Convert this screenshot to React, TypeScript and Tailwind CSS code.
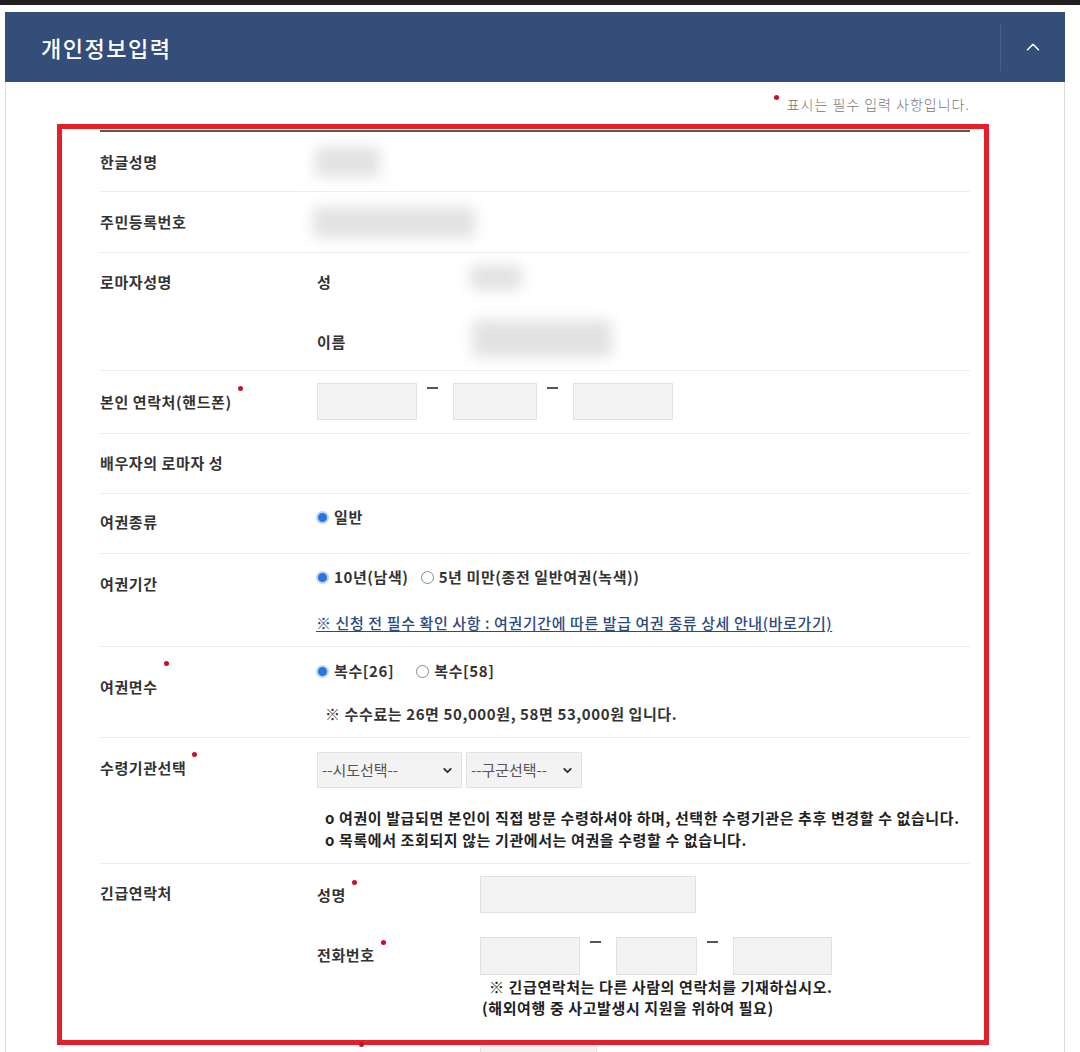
import { ChevronDown, ChevronUp } from "lucide-react";

const labelCls = "w-[217px] shrink-0 text-[15px] leading-[20px] font-bold text-[#333]";
const inputCls = "bg-[#f3f3f3] border border-[#e2e2e2]";

function Dot({ top = "-top-[8px]" }: { top?: string }) {
  return <span className={`absolute -right-[11px] ${top} w-[5px] h-[5px] rounded-full bg-[#c8102e]`} />;
}

function Req({ text, top }: { text: string; top?: string }) {
  return (
    <span className="relative inline-block">
      {text}
      <Dot top={top} />
    </span>
  );
}

function Radio({ checked, label }: { checked?: boolean; label: string }) {
  return (
    <span className="flex items-center gap-[5px]">
      {checked ? (
        <span className="w-[13px] h-[13px] rounded-full bg-[#2a76e0] border-[2px] border-[#bcd4f4]" />
      ) : (
        <span className="w-[13px] h-[13px] rounded-full border border-[#8a8a8a] bg-white" />
      )}
      <span>{label}</span>
    </span>
  );
}

function Dash() {
  return <span className="self-start mt-[4px] ml-[10px] mr-[15px] w-[11px] h-[2px] bg-[#555]" />;
}

function Blur({ w, h }: { w: string; h: string }) {
  return <div className={`${w} ${h} bg-[#e2e2e2] blur-[7px] rounded`} />;
}

function SelectBox({ w, text }: { w: string; text: string }) {
  return (
    <div className={`${w} h-[36px] ${inputCls} flex items-center justify-between pl-[4px] pr-[7px] text-[15px] tracking-normal font-normal text-[#555]`}>
      <span>{text}</span>
      <ChevronDown size={13} strokeWidth={3.5} className="text-[#333]" />
    </div>
  );
}

export default function App() {
  return (
    <div className="w-[1080px] h-[1052px] overflow-hidden bg-white font-['Noto_Sans_CJK_KR',sans-serif]">
      <div className="h-[5px] bg-[#1e1e1e]" />
      <div className="ml-[5px] w-[1060px] mt-[7px]">
        {/* header */}
        <div className="h-[70px] bg-[#344d79] flex items-center">
          <div className="flex-1 pl-[36px] text-[22px] font-medium text-white tracking-[1.5px]">개인정보입력</div>
          <div className="w-[65px] h-[47px] border-l border-[#45608c] flex items-center justify-center">
            <ChevronUp size={22} strokeWidth={1.6} className="text-white" />
          </div>
        </div>

        {/* body */}
        <div className="border-x border-[#dcdcdc] pb-[40px]">
          <div className="pt-[12px] pr-[94px] flex justify-end">
            <span className="relative text-[14px] leading-[20px] text-[#777] font-light tracking-[1px]">
              <span className="absolute -left-[13px] top-[1px] w-[5px] h-[5px] rounded-full bg-[#c8102e]" />
              표시는 필수 입력 사항입니다.
            </span>
          </div>

          <div className="mt-[10px] ml-[51px] w-[932px] border-[5px] border-[#e5202a] pt-[1px] pl-[38px]">
            <div className="w-[870px] border-t-2 border-[#5a5a5a] text-[15px] leading-[20px] tracking-[0.6px] font-bold text-[#333]">
              {/* 한글성명 */}
              <div className="flex h-[60px] border-b border-[#ededed]">
                <div className={`${labelCls} pt-[20px]`}>한글성명</div>
                <div className="pt-[15px] -ml-[2px]"><Blur w="w-[65px]" h="h-[30px]" /></div>
              </div>
              {/* 주민등록번호 */}
              <div className="flex h-[61px] border-b border-[#ededed]">
                <div className={`${labelCls} pt-[20px]`}>주민등록번호</div>
                <div className="pt-[15px] -ml-[4px]"><Blur w="w-[162px]" h="h-[31px]" /></div>
              </div>
              {/* 로마자성명 */}
              <div className="flex h-[118px] border-b border-[#ededed]">
                <div className={`${labelCls} pt-[19px]`}>로마자성명</div>
                <div className="flex-1">
                  <div className="flex h-[59px]">
                    <div className="w-[153px] pt-[19px]">성</div>
                    <div className="pt-[12px]"><Blur w="w-[52px]" h="h-[25px]" /></div>
                  </div>
                  <div className="flex h-[59px]">
                    <div className="w-[155px] pt-[20px]">이름</div>
                    <div className="pt-[8px]"><Blur w="w-[140px]" h="h-[37px]" /></div>
                  </div>
                </div>
              </div>
              {/* 본인 연락처 */}
              <div className="flex h-[63px] border-b border-[#ededed]">
                <div className={`${labelCls} pt-[21px]`}><Req text="본인 연락처(핸드폰)" top="-top-[6px]" /></div>
                <div className="pt-[12px] flex">
                  <div className={`w-[100px] h-[37px] ${inputCls}`} />
                  <Dash />
                  <div className={`w-[84px] h-[37px] ${inputCls}`} />
                  <Dash />
                  <div className={`w-[100px] h-[37px] ${inputCls}`} />
                </div>
              </div>
              {/* 배우자 */}
              <div className="flex h-[60px] border-b border-[#ededed]">
                <div className={`${labelCls} pt-[19px]`}>배우자의 로마자 성</div>
              </div>
              {/* 여권종류 */}
              <div className="flex h-[60px] border-b border-[#ededed]">
                <div className={`${labelCls} pt-[18px]`}>여권종류</div>
                <div className="pt-[13px] -ml-[1px]"><Radio checked label="일반" /></div>
              </div>
              {/* 여권기간 */}
              <div className="flex h-[93px] border-b border-[#ededed]">
                <div className={`${labelCls} pt-[20px]`}>여권기간</div>
                <div className="pt-[13px] -ml-[1px]">
                  <div className="flex gap-[12px]">
                    <Radio checked label="10년(남색)" />
                    <Radio label="5년 미만(종전 일반여권(녹색))" />
                  </div>
                  <div className="mt-[26px] text-[#2c4a7c] underline underline-offset-2 font-medium">
                    ※ 신청 전 필수 확인 사항 : 여권기간에 따른 발급 여권 종류 상세 안내(바로가기)
                  </div>
                </div>
              </div>
              {/* 여권면수 */}
              <div className="flex h-[91px] border-b border-[#ededed]">
                <div className={`${labelCls} pt-[30px]`}><Req text="여권면수" top="-top-[16px]" /></div>
                <div className="pt-[14px] -ml-[1px]">
                  <div className="flex gap-[22px]">
                    <Radio checked label="복수[26]" />
                    <Radio label="복수[58]" />
                  </div>
                  <div className="mt-[23px] pl-[9px]">※ 수수료는 26면 50,000원, 58면 53,000원 입니다.</div>
                </div>
              </div>
              {/* 수령기관선택 */}
              <div className="flex h-[126px] border-b border-[#ededed]">
                <div className={`${labelCls} pt-[20px]`}><Req text="수령기관선택" top="-top-[6px]" /></div>
                <div className="pt-[14px]">
                  <div className="flex gap-[4px]">
                    <SelectBox w="w-[145px]" text="--시도선택--" />
                    <SelectBox w="w-[116px]" text="--구군선택--" />
                  </div>
                  <div className="mt-[19px] pl-[8px] leading-[22px] text-[#222]">
                    <div>o 여권이 발급되면 본인이 직접 방문 수령하셔야 하며, 선택한 수령기관은 추후 변경할 수 없습니다.</div>
                    <div>o 목록에서 조회되지 않는 기관에서는 여권을 수령할 수 없습니다.</div>
                  </div>
                </div>
              </div>
              {/* 긴급연락처 */}
              <div className="flex h-[176px]">
                <div className={`${labelCls} pt-[19px]`}>긴급연락처</div>
                <div className="pt-[12px]">
                  <div className="flex">
                    <div className="w-[163px] pt-[9px]"><Req text="성명" top="-top-[5px]" /></div>
                    <div className={`w-[216px] h-[37px] ${inputCls}`} />
                  </div>
                  <div className="flex mt-[24px]">
                    <div className="w-[163px] pt-[8px]"><Req text="전화번호" top="-top-[5px]" /></div>
                    <div>
                      <div className="flex">
                        <div className={`w-[100px] h-[38px] ${inputCls}`} />
                        <Dash />
                        <div className={`w-[81px] h-[38px] ${inputCls}`} />
                        <Dash />
                        <div className={`w-[99px] h-[38px] ${inputCls}`} />
                      </div>
                      <div className="mt-[1px] leading-[21px] text-[#222] whitespace-nowrap">
                        <div className="pl-[9px]">※ 긴급연락처는 다른 사람의 연락처를 기재하십시오.</div>
                        <div className="pl-[2px]">(해외여행 중 사고발생시 지원을 위하여 필요)</div>
                      </div>
                    </div>
                  </div>
                </div>
              </div>
            </div>
          </div>

          {/* next row, cut off */}
          <div className="flex">
            <div className="ml-[353px] w-[5px] h-[5px] -mt-[3px] rounded-full bg-[#c8102e]" />
            <div className={`ml-[116px] mt-[1px] w-[117px] h-[30px] ${inputCls}`} />
          </div>
        </div>
      </div>
    </div>
  );
}
